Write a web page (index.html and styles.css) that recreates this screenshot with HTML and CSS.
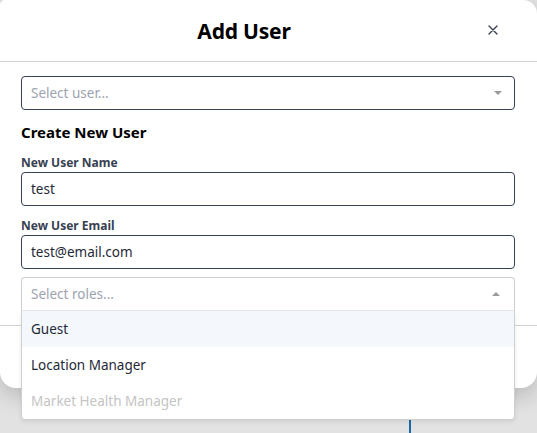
FILE: index.html
```html
<!DOCTYPE html>
<html>
<head>
<meta charset="utf-8">
<link rel="stylesheet" href="styles.css">
</head>
<body>
<div class="page">
  <div class="modal">
    <div class="header">
      <h1 class="title">Add User</h1>
      <button class="close" aria-label="Close">
        <svg width="10" height="10" viewBox="0 0 10 10"><path d="M1 1L9 9M9 1L1 9" stroke="#374151" stroke-width="1.4" stroke-linecap="round"/></svg>
      </button>
    </div>
    <div class="body">
      <div class="control dark">
        <span class="placeholder">Select user...</span>
        <span class="caret down"></span>
      </div>
      <h2 class="section">Create New User</h2>
      <label class="label">New User Name</label>
      <div class="control dark"><span class="value">test</span></div>
      <label class="label">New User Email</label>
      <div class="control dark"><span class="value">test@email.com</span></div>
      <div class="roles">
        <div class="control light open">
          <span class="placeholder">Select roles...</span>
          <span class="caret up"></span>
        </div>
        <ul class="menu">
          <li class="option active">Guest</li>
          <li class="option">Location Manager</li>
          <li class="option disabled">Market Health Manager</li>
        </ul>
      </div>
    </div>
    <div class="footer"></div>
  </div>
  <div class="under">
    <div class="blue-line"></div>
  </div>
</div>
</body>
</html>
```
FILE: styles.css
```css
* { box-sizing: border-box; }
html, body { margin: 0; padding: 0; }
body {
  width: 537px;
  height: 433px;
  overflow: hidden;
  background: #e2e2e2;
  font-family: "Noto Sans", "Open Sans", sans-serif;
  color: #111827;
}
.page { display: flex; flex-direction: column; height: 433px; }
.modal {
  background: #fff;
  height: 388px;
  flex: none;
  border-radius: 5px 14px 16px 16px;
  box-shadow: 0 8px 22px rgba(0,0,0,0.18);
  display: flex;
  flex-direction: column;
  position: relative;
  z-index: 1;
}
.header {
  height: 62px;
  border-bottom: 1px solid #d4d4d4;
  display: flex;
  align-items: center;
  padding-right: 39px;
  flex: none;
}
.title {
  flex: 1;
  text-align: center;
  margin: 0;
  font-size: 21px;
  font-weight: 700;
  color: #000;
  padding-top: 1px;
  letter-spacing: -0.2px;
}
.close {
  border: 0;
  background: none;
  padding: 0;
  width: 10px;
  height: 10px;
  display: flex;
  align-items: center;
  justify-content: center;
  margin-top: -2px;
}
.body {
  padding: 14px 22px 14px 21px;
  display: flex;
  flex-direction: column;
  flex: none;
}
.control {
  height: 34px;
  border-radius: 4px;
  display: flex;
  align-items: center;
  justify-content: space-between;
  padding: 0 12px 0 9px;
  font-size: 13.5px;
  background: #fff;
}
.control.dark { border: 1px solid #374151; }
.control.light { border: 1px solid #cfcfcf; }
.control.open { border-radius: 4px 4px 0 0; border-bottom-color: #e5e7eb; }
.placeholder { color: #9ca3af; }
.value { color: #1f2937; }
.caret {
  width: 0; height: 0;
  border-left: 4px solid transparent;
  border-right: 4px solid transparent;
}
.caret.down { border-top: 4px solid #9a9a9a; }
.caret.up { border-bottom: 4px solid #9a9a9a; margin-right: 2px; }
.section {
  margin: 12px 0 0;
  font-size: 15px;
  font-weight: 700;
  color: #000;
  line-height: 21px;
}
.label {
  display: block;
  font-size: 12px;
  font-weight: 700;
  color: #374151;
  line-height: 16px;
  margin: 12px 0 1px;
}
.roles { position: relative; margin-top: 8px; }
.menu {
  position: absolute;
  top: 34px;
  left: 0;
  right: 0;
  margin: 0;
  padding: 0;
  list-style: none;
  background: #fff;
  border: 1px solid #cfcfcf;
  border-top: 0;
  border-radius: 0 0 4px 4px;
  box-shadow: 0 2px 4px rgba(0,0,0,0.08);
  z-index: 5;
}
.option {
  height: 36px;
  display: flex;
  align-items: center;
  padding: 0 9px;
  font-size: 13.5px;
  color: #1f2937;
}
.option.active { background: #f4f8fd; }
.option.disabled { color: #c4c4c4; }
.footer { border-top: 1px solid #d4d4d4; flex: 1; }
.under { flex: 1; position: relative; }
.blue-line {
  margin-left: 409px;
  margin-top: 12px;
  width: 2px;
  height: 40px;
  background: #1a6aa8;
}
```
